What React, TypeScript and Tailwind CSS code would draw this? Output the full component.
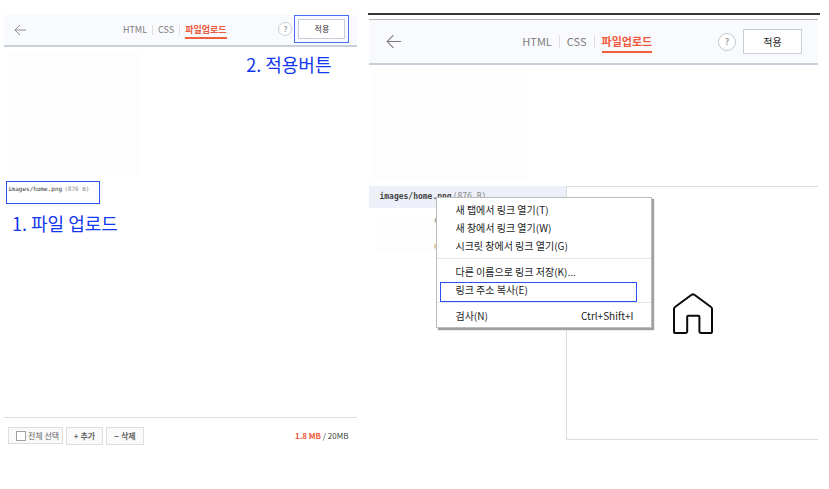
import React from "react";

function BackArrow({ className }: { className: string }) {
  return (
    <svg viewBox="0 0 16 16" className={className} fill="none" stroke="#777" strokeWidth="1.1" aria-hidden="true">
      <path d="M8 1.2 1.2 8 8 14.8M1.2 8H16" />
    </svg>
  );
}

function Tabs({ large = false }: { large?: boolean }) {
  const size = large ? "text-[11px] gap-[7px] h-[22px]" : "text-[9px] gap-[5px] h-[17px]";
  return (
    <nav className={`mr-[14px] flex items-center whitespace-nowrap text-[#7c7c7c] ${size}`}>
      <a href="#html">HTML</a>
      <span className="h-3/5 w-px bg-[#dfdfe2]" />
      <a href="#css">CSS</a>
      <span className="h-3/5 w-px bg-[#dfdfe2]" />
      <a href="#upload" className="flex h-full items-center border-b-2 border-[#f0603c] pt-[2px] font-bold text-[#ee5a3c]">
        파일업로드
      </a>
    </nav>
  );
}

function MenuItem({ label, shortcut, marked = false }: { label: string; shortcut?: string; marked?: boolean }) {
  return (
    <li className="relative">
      <button type="button" role="menuitem" className="flex h-[18px] w-full items-center justify-between pr-[18px] pl-[18px] text-left">
        <span>{label}</span>
        {shortcut && <span>{shortcut}</span>}
      </button>
      {marked && <span className="absolute top-[2px] right-[14px] left-[3px] h-5 border border-[#2b50f0]" />}
    </li>
  );
}

function Separator() {
  return <li role="separator" className="mt-1 mb-[3px] h-px bg-[#e6e6e6]" />;
}

function ContextMenu() {
  return (
    <ul
      role="menu"
      className="absolute top-[11px] left-[67px] w-[216px] border border-[#bcbcbc] bg-white pt-[2px] pb-[3px] text-[10px] whitespace-nowrap text-[#222] shadow-[2px_2px_1px_#a0a0a0]"
    >
      <MenuItem label="새 탭에서 링크 열기(T)" />
      <MenuItem label="새 창에서 링크 열기(W)" />
      <MenuItem label="시크릿 창에서 링크 열기(G)" />
      <Separator />
      <MenuItem label="다른 이름으로 링크 저장(K)..." />
      <MenuItem label="링크 주소 복사(E)" marked />
      <Separator />
      <MenuItem label="검사(N)" shortcut="Ctrl+Shift+I" />
    </ul>
  );
}

function UploadPanel() {
  return (
    <section className="min-w-0 flex-[353] pt-[15px]">
      <header className="flex h-8 border-b-2 border-[#c8d0da] bg-[#f9fafd] pr-2 pl-[10px]">
        <div className="flex flex-1 items-center">
          <button type="button" aria-label="뒤로">
            <BackArrow className="h-3 w-3" />
          </button>
        </div>
        <div className="flex items-center">
          <Tabs />
        </div>
        <div className="flex flex-1 items-start justify-end gap-[2px]">
          <button type="button" className="mt-[7px] flex h-[14px] w-[14px] shrink-0 items-center justify-center rounded-full border border-[#c9ced6] bg-white text-[8px] font-medium text-[#8b929c]">
            ?
          </button>
          <div className="flex h-[28px] shrink-0 items-center border border-[#4a6cf2] px-[3px]">
            <button type="button" className="h-5 w-[47px] border border-[#c9ced6] bg-white text-[8px] text-[#333]">
              적용
            </button>
          </div>
        </div>
      </header>

      <div className="flex justify-between pt-[3px] pr-[26px] pl-1">
        <div className="h-[127px] w-[134px] bg-[#fdfdfd]" />
        <p className="text-[18px] leading-7 whitespace-nowrap text-[#1238f0]">2. 적용버튼</p>
      </div>

      <div className="mt-1 ml-[2px] h-[23px] w-[94px] border border-[#2b50f0] pt-[2px] pl-px font-['DejaVu_Sans_Mono',monospace] text-[6px] leading-[10px] whitespace-nowrap">
        <a href="#home.png" className="text-[#333]">images/home.png</a>
        <span className="ml-[2px] text-[#888]">(876 B)</span>
      </div>
      <p className="mt-[5px] ml-2 min-h-[208px] text-[18px] leading-7 text-[#1238f0]">1. 파일 업로드</p>

      <footer className="flex items-start border-t border-[#dedede] pt-[9px] pr-[9px] pl-1 text-[8px] text-[#666]">
        <label className="flex h-[17px] w-[55px] shrink-0 items-center gap-[2px] border border-[#dedede] bg-[#fafafa] pl-[7px] whitespace-nowrap">
          <input type="checkbox" className="h-[10px] w-[10px] shrink-0 appearance-none border border-[#a0a0a0] bg-white" />
          전체 선택
        </label>
        <button type="button" className="ml-[3px] h-[18px] w-[37px] border border-[#dedede] bg-[#fafafa] font-bold text-[#666]">
          + 추가
        </button>
        <button type="button" className="ml-[3px] h-[18px] w-[38px] border border-[#dedede] bg-[#fafafa] font-bold text-[#666]">
          − 삭제
        </button>
        <p className="ml-auto text-[8px] leading-[18px] whitespace-nowrap text-[#444]">
          <span className="font-bold text-[#ee5a3c]">1.8 MB</span> / 20MB
        </p>
      </footer>
    </section>
  );
}

function CopyLinkPanel() {
  return (
    <section className="min-w-0 flex-[451] pt-[13px]">
      <div className="h-[2px] bg-[#3a3638]" />
      <div className="pr-[2px] pl-px">
        <header className="mt-1 flex h-[46px] items-center border-t border-b-2 border-t-[#b8b8b8] border-b-[#c8d0da] bg-[#f9fafd] pr-4 pl-[17px]">
          <div className="flex flex-1 items-center">
            <button type="button" aria-label="뒤로">
              <BackArrow className="h-[15px] w-[15px]" />
            </button>
          </div>
          <Tabs large />
          <div className="flex flex-1 items-center justify-end gap-[7px]">
            <button type="button" className="flex h-[18px] w-[18px] shrink-0 items-center justify-center rounded-full border border-[#c3c9d2] bg-white text-[9px] font-medium text-[#8b929c]">
              ?
            </button>
            <button type="button" className="h-[25px] w-[59px] shrink-0 border border-[#c9ced6] bg-white text-[10px] text-[#222]">
              적용
            </button>
          </div>
        </header>

        <div className="mt-[7px] ml-[3px] h-[108px] w-[157px] bg-[#fdfdfd]" />

        <div className="relative mt-[6px] flex min-h-[254px]">
          <div className="w-[197px] shrink-0">
            <div className="flex h-[22px] items-center gap-px bg-[#edf0f9] pl-[10px] font-['DejaVu_Sans_Mono',monospace] text-[8px] whitespace-nowrap">
              <a href="#home.png" className="font-bold text-[#444]">images/home.png</a>
              <span className="text-[#888]">(876 B)</span>
            </div>
            <div className="mt-[7px] ml-[6px] flex h-[36px] w-[63px] flex-col items-end justify-between bg-[#fdfdfd] text-[8px] leading-[10px]">
              <span className="text-[#777]">c</span>
              <span className="text-[#c99a50]">e</span>
            </div>
          </div>
          <div className="flex min-w-0 flex-1 items-center justify-center border-t border-b border-l border-[#dcdcdc]">
            <svg viewBox="0 0 40 41" className="h-[41px] w-[40px]" fill="none" stroke="#0a0a0a" strokeWidth="2" strokeLinejoin="round" role="img" aria-label="home">
              <path d="M18.6 1.8Q20 .9 21.4 1.8L38 14Q39 14.8 39 16V38.4Q39 40 37.4 40H27.8Q26.4 40 26.4 38.6V23.8Q26.4 22.8 25.4 22.8H15.2Q14.2 22.8 14.2 23.8V38.6Q14.2 40 12.8 40H2.6Q1 40 1 38.4V16Q1 14.8 2 14Z" />
            </svg>
          </div>
          <ContextMenu />
        </div>
      </div>
    </section>
  );
}

export default function App() {
  return (
    <main className="flex min-h-screen gap-[11px] bg-white pr-[9px] pl-1 font-['Noto_Sans_CJK_KR',sans-serif]">
      <UploadPanel />
      <CopyLinkPanel />
    </main>
  );
}
